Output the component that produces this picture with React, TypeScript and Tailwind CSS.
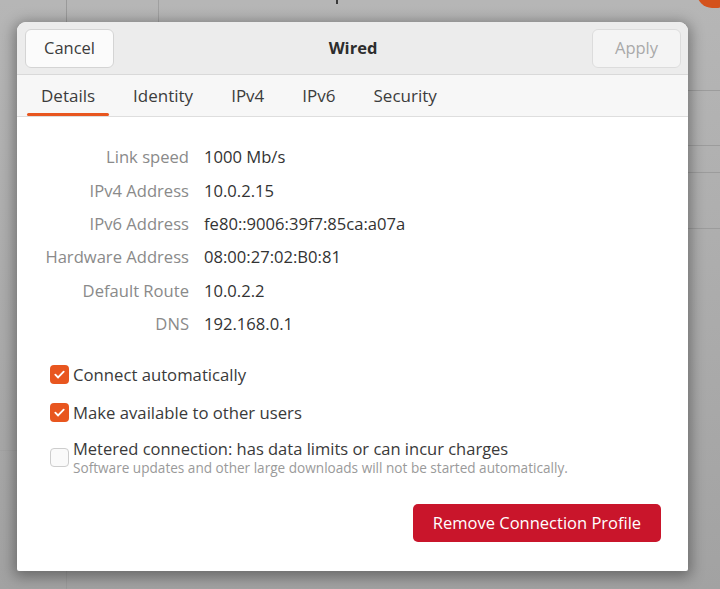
import type { ReactNode } from 'react';

const details: [string, string][] = [
  ['Link speed', '1000 Mb/s'],
  ['IPv4 Address', '10.0.2.15'],
  ['IPv6 Address', 'fe80::9006:39f7:85ca:a07a'],
  ['Hardware Address', '08:00:27:02:B0:81'],
  ['Default Route', '10.0.2.2'],
  ['DNS', '192.168.0.1'],
];

const tabs = ['Details', 'Identity', 'IPv4', 'IPv6', 'Security'];

function CheckBox({ checked }: { checked: boolean }) {
  if (!checked) {
    return (
      <span className="h-[19px] w-[19px] shrink-0 rounded-[4px] border border-[#cdcdcd] bg-[#fafafa]" />
    );
  }
  return (
    <span className="flex h-[19px] w-[19px] shrink-0 items-center justify-center rounded-[4px] bg-[#e8561f]">
      <svg width="13" height="13" viewBox="0 0 14 14" fill="none">
        <path d="M2.5 7.2l3 3L11.5 4" stroke="white" strokeWidth="2" strokeLinecap="round" strokeLinejoin="round" />
      </svg>
    </span>
  );
}

function CheckRow({ checked, children }: { checked: boolean; children: ReactNode }) {
  return (
    <div className="flex h-[38px] items-center gap-[4px]">
      <CheckBox checked={checked} />
      <span className="text-[16.7px] text-[#3a3a3a]">{children}</span>
    </div>
  );
}

export default function App() {
  return (
    <div className="relative h-[589px] w-[720px] overflow-hidden bg-[#ababab] pl-[17px] pt-[22px] font-['Open_Sans',sans-serif]">
      {/* blurred window behind the dialog */}
      <div className="pointer-events-none absolute inset-0 bg-gradient-to-b from-[#b6b6b6] to-[#a2a2a2]">
        <span className="absolute left-[66px] top-0 h-full w-px bg-[#9a9a9a]" />
        <span className="absolute left-[158px] top-0 h-[22px] w-px bg-[#a0a0a0]" />
        <span className="absolute left-[336px] top-0 h-[4px] w-[2px] bg-[#3a3a3a]" />
        <span className="absolute left-0 top-[450px] h-px w-[17px] bg-[#a2a2a2]" />
        <span className="absolute right-0 top-[90px] h-px w-[32px] bg-[#9c9c9c]" />
        <span className="absolute right-0 top-[145px] h-px w-[32px] bg-[#9c9c9c]" />
        <span className="absolute right-0 top-[172px] h-px w-[32px] bg-[#9c9c9c]" />
        <span className="absolute right-0 top-[228px] h-px w-[32px] bg-[#9c9c9c]" />
        <span className="absolute left-[697px] top-[-22px] h-[30px] w-[34px] rounded-full bg-[#d4521c]" />
      </div>

      <div className="relative flex h-[549px] w-[671px] flex-col overflow-hidden rounded-t-[9px] rounded-b-[2px] bg-white shadow-[0_3px_14px_3px_rgba(0,0,0,0.35)]">
        <header className="flex h-[53px] items-center justify-between border-b border-[#d9d9d9] bg-[#ececec] pl-[8px] pr-[7px]">
          <button className="h-[39px] w-[89px] rounded-[6px] border border-[#d4d4d4] bg-[#fbfbfb] text-[16.5px] text-[#3c3c3c]">
            Cancel
          </button>
          <span className="text-[16.5px] font-bold text-[#2d2d2d]">Wired</span>
          <button className="h-[39px] w-[89px] rounded-[6px] border border-[#dcdcdc] bg-[#f4f4f4] text-[16.5px] text-[#a9a9a9]">
            Apply
          </button>
        </header>

        <nav className="flex h-[42px] shrink-0 items-stretch border-b border-[#dedede] bg-[#f7f7f7] pl-[5px]">
          {tabs.map((t, i) => (
            <div key={t} className="relative flex items-center px-[19px] pt-px text-[17px] text-[#3c3c3c]">
              {t}
              {i === 0 && <span className="absolute bottom-0 left-[5px] right-[5px] h-[3px] rounded-full bg-[#e8561f]" />}
            </div>
          ))}
        </nav>

        <div className="flex flex-1 flex-col pt-[24px]">
          <div className="grid grid-cols-[172px_1fr] gap-x-[15px] text-[16.6px]">
            {details.map(([label, value]) => (
              <div key={label} className="contents">
                <div className="flex h-[33.4px] items-center justify-end text-[#8a8a8a]">{label}</div>
                <div className="flex h-[33.4px] items-center text-[#333333]">{value}</div>
              </div>
            ))}
          </div>

          <div className="mt-[14px] pl-[33px]">
            <CheckRow checked>Connect automatically</CheckRow>
            <CheckRow checked>Make available to other users</CheckRow>
            <div className="mt-[6px] flex items-center gap-[4px]">
              <CheckBox checked={false} />
              <div className="flex flex-col">
                <span className="h-[23px] text-[16.5px] leading-[23px] text-[#3a3a3a]">
                  Metered connection: has data limits or can incur charges
                </span>
                <span className="-mt-[2px] h-[19px] text-[13.6px] leading-[19px] text-[#9a9a9a]">
                  Software updates and other large downloads will not be started automatically.
                </span>
              </div>
            </div>
          </div>

          <div className="mt-auto flex justify-end pb-[29px] pr-[27px]">
            <button className="h-[38px] w-[248px] rounded-[5px] bg-[#c9152b] text-[16.5px] text-white">
              Remove Connection Profile
            </button>
          </div>
        </div>
      </div>
    </div>
  );
}
